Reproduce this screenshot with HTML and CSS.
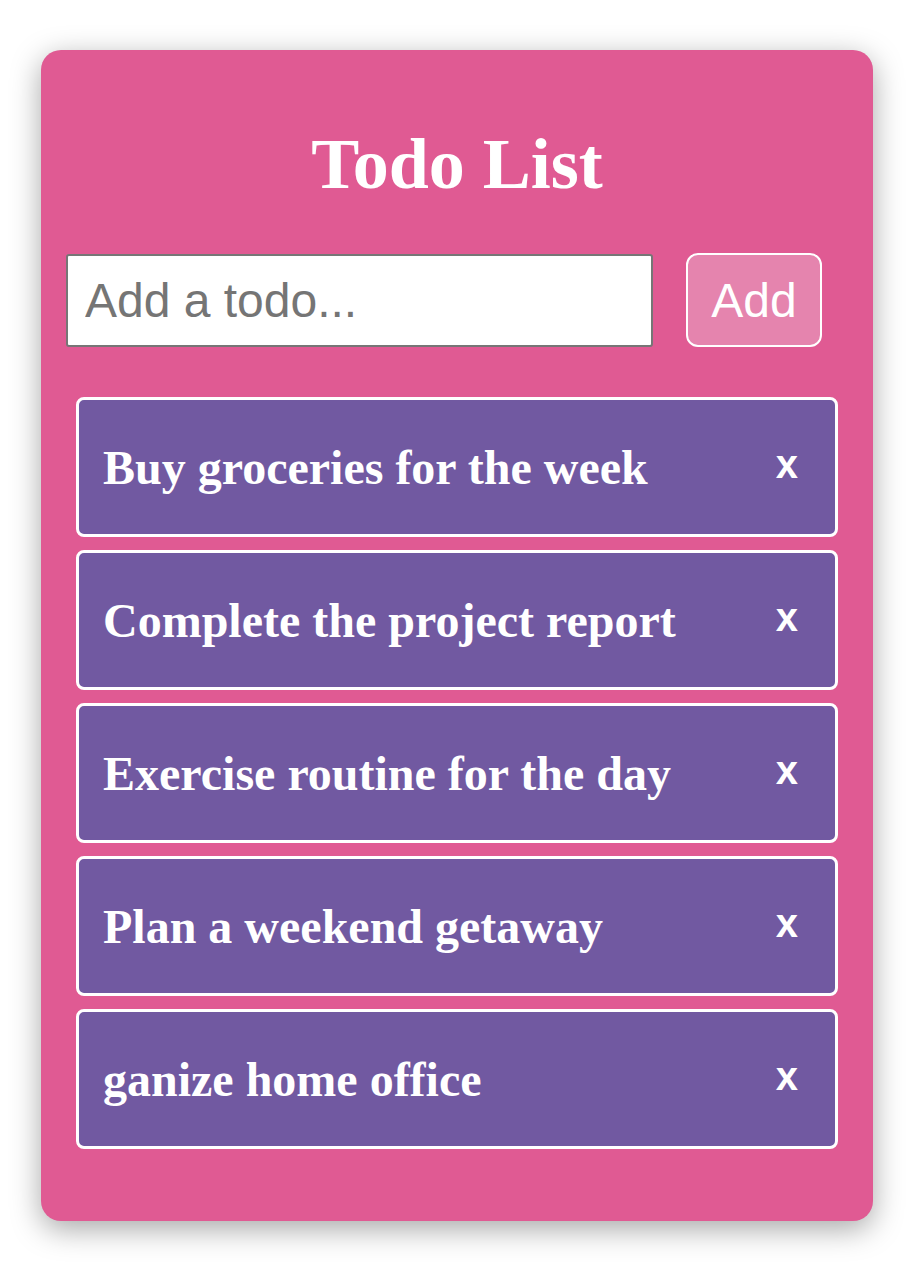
FILE: index.html
```html
<!DOCTYPE html>
<html lang="en">
<head>
  <meta charset="UTF-8" />
  <title>Todo List</title>
  <link rel="stylesheet" href="styles.css">
</head>
<body>

<div class="todo-app">
  <h1>Todo List</h1>

  <form class="todo-form">
    <input type="text" class="todo-input" placeholder="Add a todo...">
    <button type="button" class="add-btn">Add</button>
  </form>

  <ul class="todo-list">
    <li class="todo-item">
      <span class="todo-text">Buy groceries for the week</span>
      <button type="button" class="delete-btn">x</button>
    </li>
    <li class="todo-item">
      <span class="todo-text">Complete the project report</span>
      <button type="button" class="delete-btn">x</button>
    </li>
    <li class="todo-item">
      <span class="todo-text">Exercise routine for the day</span>
      <button type="button" class="delete-btn">x</button>
    </li>
    <li class="todo-item">
      <span class="todo-text">Plan a weekend getaway</span>
      <button type="button" class="delete-btn">x</button>
    </li>
    <li class="todo-item">
      <span class="todo-text">ganize home office</span>
      <button type="button" class="delete-btn">x</button>
    </li>
  </ul>
</div>

</body>
</html>
```

FILE: styles.css
```css
body {
  margin: 0;
  padding: 50px 0 43px;
  background: #fff;
  font-family: "Liberation Serif", "Times New Roman", serif;
}
.todo-app {
  box-sizing: border-box;
  width: 832px;
  margin: 0 auto;
  padding: 74px 25px 72px;
  background: #e05a93;
  border-radius: 20px;
  box-shadow: 0 8px 30px rgba(0, 0, 0, 0.35);
}
h1 {
  margin: 0 0 49px;
  font-size: 72px;
  line-height: 80px;
  font-weight: bold;
  color: #fff;
  text-align: center;
}
.todo-form {
  display: flex;
  align-items: center;
  gap: 33px;
  height: 94px;
  margin: 0;
}
.todo-input {
  box-sizing: border-box;
  width: 587px;
  height: 93px;
  padding: 0 17px;
  border: 2px solid #767676;
  border-radius: 3px;
  background: #fff;
  font-family: "Liberation Sans", Arial, sans-serif;
  font-size: 48px;
  color: #000;
  outline: none;
}
.todo-input::placeholder {
  color: #757575;
}
.add-btn {
  box-sizing: border-box;
  width: 136px;
  height: 94px;
  padding: 0;
  border: 2px solid #fff;
  border-radius: 12px;
  background: #e584ae;
  color: #fff;
  font-family: "Liberation Sans", Arial, sans-serif;
  font-size: 48px;
}
.todo-list {
  list-style: none;
  margin: 50px 10px 0;
  padding: 0;
  display: flex;
  flex-direction: column;
  gap: 13px;
}
.todo-item {
  box-sizing: border-box;
  height: 140px;
  display: flex;
  align-items: center;
  justify-content: space-between;
  padding: 0 37px 0 24px;
  border: 3px solid #fff;
  border-radius: 8px;
  background: #7159a1;
}
.todo-text {
  font-size: 48px;
  font-weight: bold;
  color: #fff;
}
.delete-btn {
  padding: 0 0 6px;
  border: none;
  background: none;
  color: #fff;
  font-family: "Liberation Sans", Arial, sans-serif;
  font-size: 40px;
  font-weight: bold;
  line-height: 1;
}
```
